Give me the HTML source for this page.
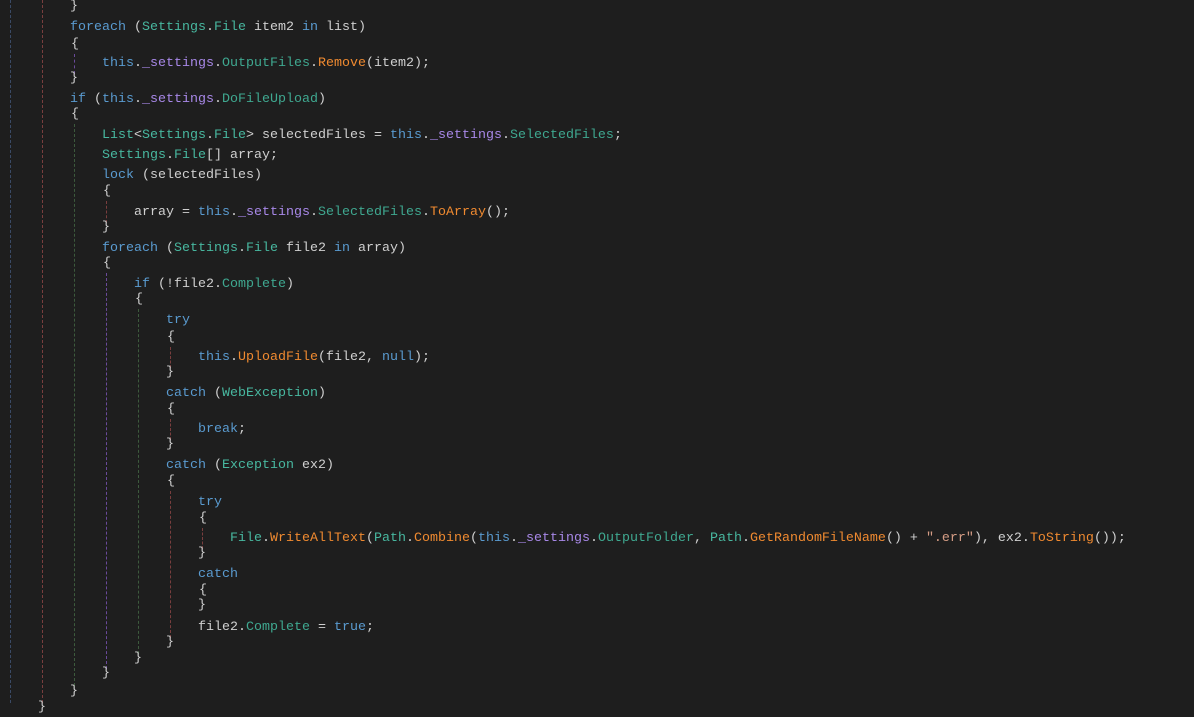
<!DOCTYPE html>
<html><head><meta charset="utf-8"><style>
html,body{margin:0;padding:0;background:#1e1e1e;width:1194px;height:703px;overflow:hidden}
#w{position:absolute;left:0;top:2px;width:1194px;height:703px}
.l{position:absolute;white-space:pre;font-family:"Liberation Mono","Noto Sans CJK SC",monospace;font-size:13.33px;line-height:18px;height:18px;color:#d0d0d0}
.k{color:#5a9bd0}.t{color:#48b8a0}.p{color:#3fa890}.f{color:#a888e8}.m{color:#f08a30}.s{color:#d69d85}
.g{position:absolute;width:0;border-left:1px dashed}
</style></head><body>
<div class="g" style="left:10px;top:0;height:703px;border-color:#3a4a66"></div>
<div class="g" style="left:42px;top:0;height:703px;border-color:#7a3e3e"></div>
<div id="w">
<div class="g" style="left:74px;top:52px;height:20px;border-color:#6a4a9a"></div>
<div class="g" style="left:74px;top:122px;height:562px;border-color:#3d5a3d"></div>
<div class="g" style="left:106px;top:199px;height:22px;border-color:#7a3e3e"></div>
<div class="g" style="left:106px;top:271px;height:396px;border-color:#6a4a9a"></div>
<div class="g" style="left:138px;top:307px;height:345px;border-color:#3d5a3d"></div>
<div class="g" style="left:170px;top:345px;height:21px;border-color:#7a3e3e"></div>
<div class="g" style="left:170px;top:417px;height:21px;border-color:#7a3e3e"></div>
<div class="g" style="left:170px;top:489px;height:147px;border-color:#7a3e3e"></div>
<div class="g" style="left:202px;top:526px;height:21px;border-color:#7a3e3e"></div>

<div class="l" style="left:70px;top:-4px">}</div>
<div class="l" style="left:70px;top:17px"><span class="k">foreach</span> (<span class="t">Settings</span>.<span class="t">File</span> item2 <span class="k">in</span> list)</div>
<div class="l" style="left:71px;top:34px">{</div>
<div class="l" style="left:102px;top:53px"><span class="k">this</span>.<span class="f">_settings</span>.<span class="p">OutputFiles</span>.<span class="m">Remove</span>(item2);</div>
<div class="l" style="left:70px;top:68px">}</div>
<div class="l" style="left:70px;top:89px"><span class="k">if</span> (<span class="k">this</span>.<span class="f">_settings</span>.<span class="p">DoFileUpload</span>)</div>
<div class="l" style="left:71px;top:104px">{</div>
<div class="l" style="left:102px;top:125px"><span class="t">List</span>&lt;<span class="t">Settings</span>.<span class="t">File</span>&gt; selectedFiles = <span class="k">this</span>.<span class="f">_settings</span>.<span class="p">SelectedFiles</span>;</div>
<div class="l" style="left:102px;top:145px"><span class="t">Settings</span>.<span class="t">File</span>[] array;</div>
<div class="l" style="left:102px;top:165px"><span class="k">lock</span> (selectedFiles)</div>
<div class="l" style="left:103px;top:181px">{</div>
<div class="l" style="left:134px;top:202px">array = <span class="k">this</span>.<span class="f">_settings</span>.<span class="p">SelectedFiles</span>.<span class="m">ToArray</span>();</div>
<div class="l" style="left:102px;top:217px">}</div>
<div class="l" style="left:102px;top:238px"><span class="k">foreach</span> (<span class="t">Settings</span>.<span class="t">File</span> file2 <span class="k">in</span> array)</div>
<div class="l" style="left:103px;top:253px">{</div>
<div class="l" style="left:134px;top:274px"><span class="k">if</span> (!file2.<span class="p">Complete</span>)</div>
<div class="l" style="left:135px;top:289px">{</div>
<div class="l" style="left:166px;top:310px"><span class="k">try</span></div>
<div class="l" style="left:167px;top:327px">{</div>
<div class="l" style="left:198px;top:347px"><span class="k">this</span>.<span class="m">UploadFile</span>(file2, <span class="k">null</span>);</div>
<div class="l" style="left:166px;top:362px">}</div>
<div class="l" style="left:166px;top:383px"><span class="k">catch</span> (<span class="t">WebException</span>)</div>
<div class="l" style="left:167px;top:399px">{</div>
<div class="l" style="left:198px;top:419px"><span class="k">break</span>;</div>
<div class="l" style="left:166px;top:434px">}</div>
<div class="l" style="left:166px;top:455px"><span class="k">catch</span> (<span class="t">Exception</span> ex2)</div>
<div class="l" style="left:167px;top:471px">{</div>
<div class="l" style="left:198px;top:492px"><span class="k">try</span></div>
<div class="l" style="left:199px;top:508px">{</div>
<div class="l" style="left:230px;top:528px"><span class="t">File</span>.<span class="m">WriteAllText</span>(<span class="t">Path</span>.<span class="m">Combine</span>(<span class="k">this</span>.<span class="f">_settings</span>.<span class="p">OutputFolder</span>, <span class="t">Path</span>.<span class="m">GetRandomFileName</span>() + <span class="s">".err"</span>), ex2.<span class="m">ToString</span>());</div>
<div class="l" style="left:198px;top:543px">}</div>
<div class="l" style="left:198px;top:564px"><span class="k">catch</span></div>
<div class="l" style="left:199px;top:580px">{</div>
<div class="l" style="left:198px;top:595px">}</div>
<div class="l" style="left:198px;top:617px">file2.<span class="p">Complete</span> = <span class="k">true</span>;</div>
<div class="l" style="left:166px;top:632px">}</div>
<div class="l" style="left:134px;top:648px">}</div>
<div class="l" style="left:102px;top:663px">}</div>
<div class="l" style="left:70px;top:681px">}</div>
<div class="l" style="left:38px;top:697px">}</div>
</div>
</body></html>
